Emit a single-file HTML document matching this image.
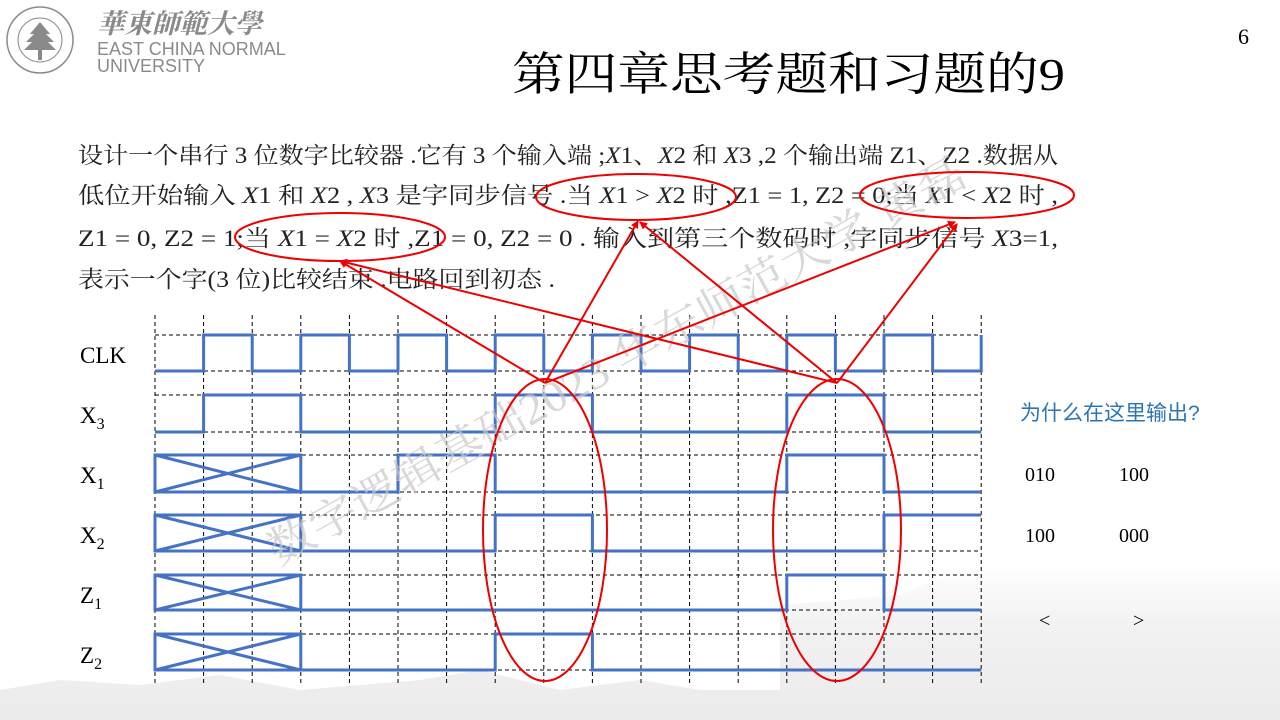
<!DOCTYPE html>
<html><head><meta charset="utf-8"><style>
html,body{margin:0;padding:0;background:#fff;}
body{width:1280px;height:720px;position:relative;overflow:hidden;font-family:"Liberation Serif","Noto Serif CJK SC",serif;}
svg{position:absolute;left:0;top:0;}
</style></head><body>
<svg width="1280" height="720" viewBox="0 0 1280 720" xmlns="http://www.w3.org/2000/svg">
<defs>
<linearGradient id="bg" x1="0" y1="0" x2="0" y2="1"><stop offset="0" stop-color="#f4f4f4" stop-opacity="0"/><stop offset="0.4" stop-color="#f2f2f2"/><stop offset="1" stop-color="#ebebeb"/></linearGradient>
<marker id="ah" markerWidth="8" markerHeight="8" refX="7" refY="4" orient="auto" markerUnits="userSpaceOnUse"><path d="M0,0 L8,4 L0,8 Z" fill="#e00"/></marker>
</defs>
<path d="M0 690 L60 680 L140 685 L220 675 L300 690 L420 680 L480 670 L560 690 L640 680 L700 690 L780 690 L780 605 L900 595 L960 570 L1080 560 L1200 570 L1280 560 L1280 720 L0 720 Z" fill="url(#bg)"/>
<g fill="none" stroke="#8a8a8a">
<circle cx="40" cy="40" r="33" stroke-width="1.5"/>
<circle cx="40" cy="40" r="22" stroke-width="1"/>
</g>
<g fill="#8a8a8a">
<path d="M40 22 L30 34 L50 34 Z M40 28 L26 42 L54 42 Z M40 34 L24 50 L56 50 Z"/>
<rect x="38" y="48" width="4" height="12"/>
</g>
<text x="97" y="33" font-family="Noto Serif CJK SC,serif" font-size="27" font-weight="bold" fill="#8a8a8a" font-style="italic" textLength="165" lengthAdjust="spacingAndGlyphs">華東師範大學</text>
<text x="97" y="55" font-family="Liberation Sans,sans-serif" font-size="18" fill="#8a8a8a">EAST CHINA NORMAL</text>
<text x="97" y="72" font-family="Liberation Sans,sans-serif" font-size="18" fill="#8a8a8a">UNIVERSITY</text>
<text x="512" y="90" font-family="Liberation Serif,Noto Serif CJK SC,serif" font-size="46" fill="#000" textLength="553" lengthAdjust="spacingAndGlyphs">第四章思考题和习题的9</text>
<text x="1238" y="44" font-size="22" fill="#000">6</text>
<g font-family="Liberation Serif,Noto Serif CJK SC,serif" font-size="23" fill="#222">
<text x="78" y="163" textLength="980" lengthAdjust="spacingAndGlyphs">设计一个串行 3 位数字比较器 .它有 3 个输入端 ;<tspan font-style="italic">X</tspan>1、<tspan font-style="italic">X</tspan>2 和 <tspan font-style="italic">X</tspan>3 ,2 个输出端 Z1、Z2 .数据从</text>
<text x="78" y="203" textLength="980" lengthAdjust="spacingAndGlyphs">低位开始输入 <tspan font-style="italic">X</tspan>1 和 <tspan font-style="italic">X</tspan>2 , <tspan font-style="italic">X</tspan>3 是字同步信号 .当 <tspan font-style="italic">X</tspan>1 &gt; <tspan font-style="italic">X</tspan>2 时 ,Z1 = 1, Z2 = 0;当 <tspan font-style="italic">X</tspan>1 &lt; <tspan font-style="italic">X</tspan>2 时 ,</text>
<text x="78" y="246" textLength="980" lengthAdjust="spacingAndGlyphs">Z1 = 0, Z2 = 1;当 <tspan font-style="italic">X</tspan>1 = <tspan font-style="italic">X</tspan>2 时 ,Z1 = 0, Z2 = 0 . 输入到第三个数码时 ,字同步信号 <tspan font-style="italic">X</tspan>3=1,</text>
<text x="78" y="287" textLength="477" lengthAdjust="spacingAndGlyphs">表示一个字(3 位)比较结束 .电路回到初态 .</text>
</g>
<g stroke="#000" stroke-width="1" stroke-dasharray="4,3">
<path d="M155 315V685M203.6 315V685M252.2 315V685M300.8 315V685M349.4 315V685M398 315V685M446.6 315V685M495.2 315V685M543.8 315V685M592.4 315V685M641 315V685M689.6 315V685M738.2 315V685M786.8 315V685M835.4 315V685M884 315V685M932.6 315V685M981.2 315V685"/>
<path d="M155 335H981M155 371H981M155 395H981M155 432H981M155 455H981M155 492H981M155 515H981M155 551H981M155 575H981M155 610H981M155 634H981M155 670H981"/>
</g>
<g fill="none" stroke="#4472c4" stroke-width="3">
<path d="M155 371H203.6V335H252.2V371H300.8V335H349.4V371H398V335H446.6V371H495.2V335H543.8V371H592.4V335H641V371H689.6V335H738.2V371H786.8V335H835.4V371H884V335H932.6V371H981.2V335"/>
<path d="M155 432H203.6V395H300.8V432H495.2V395H592.4V432H786.8V395H884V432H981.2"/>
<path d="M155 455H300.8V492H155ZM155 455L300.8 492M155 492L300.8 455M300.8 492H398V455H495.2V492H786.8V455H884V492H981.2"/>
<path d="M155 515H300.8V551H155ZM155 515L300.8 551M155 551L300.8 515M300.8 551H495.2V515H592.4V551H884V515H981.2"/>
<path d="M155 575H300.8V610H155ZM155 575L300.8 610M155 610L300.8 575M300.8 610H786.8V575H884V610H981.2"/>
<path d="M155 634H300.8V670H155ZM155 634L300.8 670M155 670L300.8 634M300.8 670H495.2V634H592.4V670H981.2"/>
</g>
<g font-size="23" fill="#000">
<text x="80" y="363">CLK</text>
<text x="80" y="423">X<tspan font-size="16" dy="6">3</tspan></text>
<text x="80" y="483">X<tspan font-size="16" dy="6">1</tspan></text>
<text x="80" y="543">X<tspan font-size="16" dy="6">2</tspan></text>
<text x="80" y="603">Z<tspan font-size="16" dy="6">1</tspan></text>
<text x="80" y="663">Z<tspan font-size="16" dy="6">2</tspan></text>
</g>
<text x="1020" y="420" font-family="Liberation Sans,Noto Sans CJK SC,sans-serif" font-size="21" fill="#2e75b6">为什么在这里输出?</text>
<g font-size="20" fill="#000">
<text x="1025" y="481">010</text><text x="1119" y="481">100</text>
<text x="1025" y="542">100</text><text x="1119" y="542">000</text>
<text x="1039" y="627">&lt;</text><text x="1133" y="627">&gt;</text>
</g>
<text x="0" y="0" transform="translate(278,566) rotate(-29)" font-family="Liberation Serif,Noto Serif CJK SC,serif" font-size="44" fill="#c8c8c8" fill-opacity="0.7" textLength="790" lengthAdjust="spacingAndGlyphs">数字逻辑基础2023 华东师范大学 黄磊</text>
<g fill="none" stroke="#e00" stroke-width="2">
<ellipse cx="545" cy="530" rx="62" ry="151"/>
<ellipse cx="837" cy="530" rx="64" ry="151"/>
<ellipse cx="636" cy="197" rx="100" ry="23"/>
<ellipse cx="967" cy="195" rx="107" ry="23"/>
<ellipse cx="340" cy="237" rx="105" ry="24"/>
<line x1="545" y1="383" x2="638" y2="221" marker-end="url(#ah)"/>
<line x1="545" y1="383" x2="340" y2="261" marker-end="url(#ah)"/>
<line x1="545" y1="383" x2="955" y2="222" marker-end="url(#ah)"/>
<line x1="837" y1="383" x2="640" y2="222" marker-end="url(#ah)"/>
<line x1="837" y1="383" x2="340" y2="261" marker-end="url(#ah)"/>
<line x1="837" y1="383" x2="957" y2="224" marker-end="url(#ah)"/>
</g>
</svg>
</body></html>
